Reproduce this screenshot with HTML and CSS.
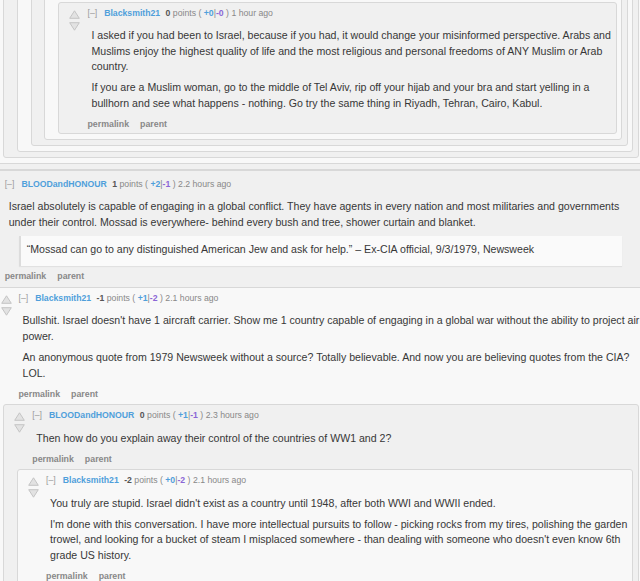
FILE: index.html
```html
<!DOCTYPE html>
<html lang="en">
<head>
<meta charset="utf-8">
<title>Comments</title>
<link rel="stylesheet" href="styles.css">
</head>
<body>
<div class="thread">
  <div class="comment stub">
    <div class="children">
      <div class="comment stub odd">
        <div class="children">
          <div class="comment stub">
            <div class="children">
              <div class="comment stub odd">
                <div class="children">
                  <div class="comment stub">
                    <div class="children">
                      <div class="comment stub odd">
                        <div class="children">
                          <div class="comment">
                            <div class="entry">
                              <div class="midcol">
                                <svg class="arrow" viewBox="0 0 11 9"><path d="M5.5 0.8 L10.3 8.3 H0.7 Z"/></svg>
                                <svg class="arrow" viewBox="0 0 11 9"><path d="M0.7 0.7 H10.3 L5.5 8.2 Z"/></svg>
                              </div>
                              <div class="content">
                                <div class="tagline"><span class="expand">[–]</span><span class="author">Blacksmith21</span> <span class="score"><b>0</b> points</span> ( <b class="up">+0</b>|<b class="down">-0</b> ) 1 hour ago</div>
                                <div class="md">
                                  <p>I asked if you had been to Israel, because if you had, it would change your misinformed perspective. Arabs and Muslims enjoy the highest quality of life and the most religious and personal freedoms of ANY Muslim or Arab country.</p>
                                  <p>If you are a Muslim woman, go to the middle of Tel Aviv, rip off your hijab and your bra and start yelling in a bullhorn and see what happens - nothing. Go try the same thing in Riyadh, Tehran, Cairo, Kabul.</p>
                                </div>
                                <div class="buttons"><span>permalink</span><span>parent</span></div>
                              </div>
                            </div>
                          </div>
                        </div>
                      </div>
                    </div>
                  </div>
                </div>
              </div>
            </div>
          </div>
        </div>
      </div>
    </div>
  </div>

  <div class="comment top">
    <div class="entry">
      <div class="midcol">
        <svg class="arrow" viewBox="0 0 11 9"><path d="M5.5 0.8 L10.3 8.3 H0.7 Z"/></svg>
        <svg class="arrow" viewBox="0 0 11 9"><path d="M0.7 0.7 H10.3 L5.5 8.2 Z"/></svg>
      </div>
      <div class="content">
        <div class="tagline"><span class="expand">[–]</span><span class="author">BLOODandHONOUR</span> <span class="score"><b>1</b> points</span> ( <b class="up">+2</b>|<b class="down">-1</b> ) 2.2 hours ago</div>
        <div class="md">
          <p>Israel absolutely is capable of engaging in a global conflict. They have agents in every nation and most militaries and governments under their control. Mossad is everywhere- behind every bush and tree, shower curtain and blanket.</p>
          <blockquote>“Mossad can go to any distinguished American Jew and ask for help.” – Ex-CIA official, 9/3/1979, Newsweek</blockquote>
        </div>
        <div class="buttons"><span>permalink</span><span>parent</span></div>
      </div>
    </div>
    <div class="children">
      <div class="comment odd">
        <div class="entry">
          <div class="midcol">
            <svg class="arrow" viewBox="0 0 11 9"><path d="M5.5 0.8 L10.3 8.3 H0.7 Z"/></svg>
            <svg class="arrow" viewBox="0 0 11 9"><path d="M0.7 0.7 H10.3 L5.5 8.2 Z"/></svg>
          </div>
          <div class="content">
            <div class="tagline"><span class="expand">[–]</span><span class="author">Blacksmith21</span> <span class="score"><b>-1</b> points</span> ( <b class="up">+1</b>|<b class="down">-2</b> ) 2.1 hours ago</div>
            <div class="md">
              <p>Bullshit. Israel doesn't have 1 aircraft carrier. Show me 1 country capable of engaging in a global war without the ability to project air power.</p>
              <p>An anonymous quote from 1979 Newsweek without a source? Totally believable. And now you are believing quotes from the CIA? LOL.</p>
            </div>
            <div class="buttons"><span>permalink</span><span>parent</span></div>
          </div>
        </div>
        <div class="children">
          <div class="comment">
            <div class="entry">
              <div class="midcol">
                <svg class="arrow" viewBox="0 0 11 9"><path d="M5.5 0.8 L10.3 8.3 H0.7 Z"/></svg>
                <svg class="arrow" viewBox="0 0 11 9"><path d="M0.7 0.7 H10.3 L5.5 8.2 Z"/></svg>
              </div>
              <div class="content">
                <div class="tagline"><span class="expand">[–]</span><span class="author">BLOODandHONOUR</span> <span class="score"><b>0</b> points</span> ( <b class="up">+1</b>|<b class="down">-1</b> ) 2.3 hours ago</div>
                <div class="md">
                  <p>Then how do you explain away their control of the countries of WW1 and 2?</p>
                </div>
                <div class="buttons"><span>permalink</span><span>parent</span></div>
              </div>
            </div>
            <div class="children">
              <div class="comment odd">
                <div class="entry">
                  <div class="midcol">
                    <svg class="arrow" viewBox="0 0 11 9"><path d="M5.5 0.8 L10.3 8.3 H0.7 Z"/></svg>
                    <svg class="arrow" viewBox="0 0 11 9"><path d="M0.7 0.7 H10.3 L5.5 8.2 Z"/></svg>
                  </div>
                  <div class="content">
                    <div class="tagline"><span class="expand">[–]</span><span class="author">Blacksmith21</span> <span class="score"><b>-2</b> points</span> ( <b class="up">+0</b>|<b class="down">-2</b> ) 2.1 hours ago</div>
                    <div class="md">
                      <p>You truly are stupid. Israel didn't exist as a country until 1948, after both WWI and WWII ended.</p>
                      <p>I'm done with this conversation. I have more intellectual pursuits to follow - picking rocks from my tires, polishing the garden trowel, and looking for a bucket of steam I misplaced somewhere - than dealing with someone who doesn't even know 6th grade US history.</p>
                    </div>
                    <div class="buttons"><span>permalink</span><span>parent</span></div>
                  </div>
                </div>
              </div>
            </div>
          </div>
        </div>
      </div>
    </div>
  </div>
</div>
</body>
</html>
```

FILE: styles.css
```css
* { box-sizing: border-box; }
html { overflow: hidden; }
html, body { margin: 0; padding: 0; }
body {
  background: #ffffff;
  font-family: "Liberation Sans", Arial, sans-serif;
  color: #373737;
  overflow: hidden;
}
.thread {
  margin: -55.3px 0 0 -24.6px;
  width: 674.4px;
}
.comment {
  border: 1px solid #d8d8d8;
  border-radius: 3px;
  padding: 3px 4.5px 4px 12.8px;
  background: #f0f0f0;
}
.comment.odd { background: #f8f8f8; }
.comment.top { padding-top: 5.8px; }
.children { margin: 5.5px 0 1px; }
.entry { display: flex; }
.midcol {
  flex: none;
  width: 18px;
  margin-left: -2.5px;
  padding-top: 4px;
  display: flex;
  flex-direction: column;
  gap: 3px;
}
.arrow { display: block; width: 11px; height: 9px; }
.arrow path { fill: #e2e2e2; stroke: #c4c4c4; stroke-width: 1; stroke-linejoin: round; }
.content { flex: 1; min-width: 0; }
.tagline {
  font-size: 8.7px;
  line-height: 14px;
  color: #888;
  white-space: nowrap;
}
.expand { color: #9a9a9a; margin-right: 7px; }
.author { color: #4f9fdb; font-weight: bold; margin-right: 3px; }
.score b { color: #555; }
.up { color: #4f9fdb; }
.down { color: #8b66d6; }
.md {
  margin: 8.5px -2px 0 4px;
  font-size: 10.6px;
  line-height: 15.6px;
}
.comment.top > .entry .md { margin-right: 2px; }
.md p { margin: 0; }
.md p + p { margin-top: 5.4px; }
.md blockquote {
  margin: 6px 20px -2px 10px;
  padding: 6px 8px 8px 6px;
  border-left: 2px solid #dcdcdc;
  background: #fafafa;
  box-shadow: 0 1px 1px rgba(0, 0, 0, 0.06);
}
.buttons {
  margin-top: 7.4px;
  display: flex;
  gap: 11px;
  font-size: 8.8px;
  line-height: 10px;
  font-weight: bold;
  color: #888;
}
```
